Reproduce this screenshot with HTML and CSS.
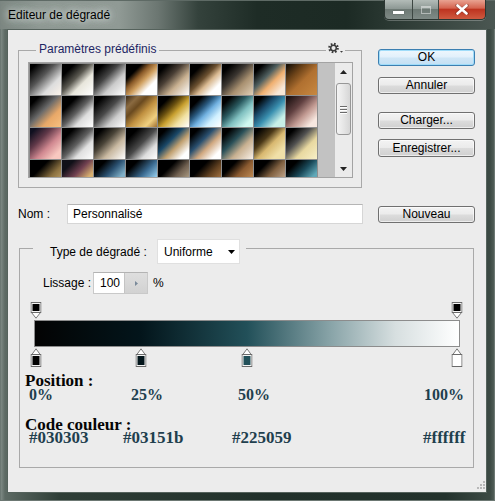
FILE: index.html
```html
<!DOCTYPE html>
<html lang="fr">
<head>
<meta charset="utf-8">
<title>Editeur de dégradé</title>
<link rel="stylesheet" href="styles.css">
</head>
<body>
<div class="window">
  <div class="titlebar">
    <span class="title">Editeur de dégradé</span>
    <div class="caps">
      <div class="cap cap-min"><span class="min-ico"></span></div>
      <div class="cap cap-max"><span class="max-ico"></span></div>
      <div class="cap cap-close">
        <svg width="14" height="11" viewBox="0 0 14 11"><path d="M2 1.5 L12 9.5 M12 1.5 L2 9.5" stroke="#3a1510" stroke-width="3.6" stroke-linecap="round" opacity=".35"/><path d="M2.5 1.5 L11.5 9.5 M11.5 1.5 L2.5 9.5" stroke="#fff" stroke-width="2.6" stroke-linecap="round"/></svg>
      </div>
    </div>
  </div>
  <div class="client">
    <div class="top">
      <div class="group presets">
        <div class="legend">Paramètres prédéfinis</div>
        <div class="gear">
          <svg width="19" height="13" viewBox="0 0 19 13"><circle cx="7.5" cy="6" r="4.1" fill="none" stroke="#3c3c3c" stroke-width="2.4" stroke-dasharray="1.6 1.62"/><circle cx="7.5" cy="6" r="2.8" fill="none" stroke="#3c3c3c" stroke-width="1.5"/><path d="M14 9 L17 9 L15.5 10.8 Z" fill="#3c3c3c"/></svg>
        </div>
        <div class="pane">
          <div class="grid">
            <div class="sw" style="background:linear-gradient(135deg,#000 10%,#555 40%,#ddd 70%,#fbf3ea)"></div>
            <div class="sw" style="background:linear-gradient(135deg,#000 20%,#5a5850 45%,#e8e6dc 65%,#fff)"></div>
            <div class="sw" style="background:linear-gradient(135deg,#000 15%,#444 40%,#ccc 65%,#fff)"></div>
            <div class="sw" style="background:linear-gradient(135deg,#000 25%,#8a5a28 40%,#d0a060 55%,#fff 75%)"></div>
            <div class="sw" style="background:linear-gradient(135deg,#000 15%,#4a3f35 40%,#c8b090 65%,#fff)"></div>
            <div class="sw" style="background:linear-gradient(135deg,#000 20%,#6b5030 45%,#d8b890 60%,#fff 80%)"></div>
            <div class="sw" style="background:linear-gradient(135deg,#000 15%,#3a3530 40%,#a89070 65%,#e0d0b8)"></div>
            <div class="sw" style="background:linear-gradient(135deg,#000 15%,#506060 40%,#f0b070 60%,#f8e8d8 85%)"></div>
            <div class="sw" style="background:linear-gradient(135deg,#1a1208 5%,#6b4218 30%,#b07030 55%,#c88840)"></div>

            <div class="sw" style="background:linear-gradient(135deg,#000 15%,#6a6a6a 45%,#e8a868 70%,#f8c080)"></div>
            <div class="sw" style="background:linear-gradient(135deg,#000 25%,#606060 50%,#ddd 70%,#fff)"></div>
            <div class="sw" style="background:linear-gradient(135deg,#000 15%,#4a4a4a 45%,#ccc 70%,#fff)"></div>
            <div class="sw" style="background:linear-gradient(135deg,#3a2a18 0,#8a6a40 20%,#6a4a20 35%,#c09040 55%,#f0d080 80%,#a07030)"></div>
            <div class="sw" style="background:linear-gradient(135deg,#000 20%,#6a5010 40%,#c8a030 55%,#f0e0a0 75%,#fff)"></div>
            <div class="sw" style="background:linear-gradient(135deg,#000 20%,#2a5a80 40%,#70b0e0 55%,#d0f0ff 75%,#fff)"></div>
            <div class="sw" style="background:linear-gradient(135deg,#000 15%,#2a5a60 40%,#80c0c0 60%,#d0f8f0 85%)"></div>
            <div class="sw" style="background:linear-gradient(135deg,#000 15%,#1a4a6a 35%,#3a90b0 55%,#c8f0e8 80%)"></div>
            <div class="sw" style="background:linear-gradient(135deg,#1a1010 5%,#604040 35%,#c09890 60%,#f8e8e0 85%)"></div>

            <div class="sw" style="background:linear-gradient(135deg,#101020 10%,#603848 35%,#d08890 60%,#f8c8c0 85%)"></div>
            <div class="sw" style="background:linear-gradient(135deg,#000 20%,#606060 50%,#e0e0e0 70%,#fff)"></div>
            <div class="sw" style="background:linear-gradient(135deg,#000 15%,#4a4438 40%,#c8b8a0 65%,#fff)"></div>
            <div class="sw" style="background:linear-gradient(135deg,#000 20%,#4a4a4a 50%,#ddd 75%,#fff)"></div>
            <div class="sw" style="background:linear-gradient(135deg,#000 15%,#1a4868 40%,#c0a070 60%,#fff 85%)"></div>
            <div class="sw" style="background:linear-gradient(135deg,#000 15%,#2a5070 40%,#d0a880 60%,#fff 85%)"></div>
            <div class="sw" style="background:linear-gradient(135deg,#000 15%,#2a5058 40%,#c8b090 65%,#f8f0e8)"></div>
            <div class="sw" style="background:linear-gradient(135deg,#000 10%,#4a3818 35%,#d8b870 55%,#f0e0a8 80%)"></div>
            <div class="sw" style="background:linear-gradient(135deg,#000 15%,#505050 40%,#e8d8a0 65%,#f8f0c8)"></div>

            <div class="sw" style="background:linear-gradient(135deg,#000 30%,#8a7040 60%,#e0c080)"></div>
            <div class="sw" style="background:linear-gradient(135deg,#101018 20%,#704050 45%,#d8b070 70%)"></div>
            <div class="sw" style="background:linear-gradient(135deg,#000 20%,#2a5070 45%,#80b0c8 70%)"></div>
            <div class="sw" style="background:linear-gradient(135deg,#000 20%,#3a6a90 50%,#90c8e8 75%)"></div>
            <div class="sw" style="background:linear-gradient(135deg,#000 30%,#706050 55%,#e0d0b0)"></div>
            <div class="sw" style="background:linear-gradient(135deg,#000 30%,#604020 55%,#e0a060)"></div>
            <div class="sw" style="background:linear-gradient(135deg,#000 25%,#8a5a30 50%,#e8b070)"></div>
            <div class="sw" style="background:linear-gradient(135deg,#000 25%,#806040 50%,#f0d8c0)"></div>
            <div class="sw" style="background:linear-gradient(135deg,#000 20%,#1a4a5a 45%,#60a8b8 70%)"></div>
          </div>
          <div class="filler"></div>
          <div class="scroll">
            <div class="sb-btn"><svg width="7" height="4" viewBox="0 0 7 4"><path d="M0 4 L3.5 0 L7 4 Z" fill="#222"/></svg></div>
            <div class="sb-track">
              <div class="thumb">
                <span class="grip-line"></span><span class="grip-line"></span><span class="grip-line"></span>
              </div>
            </div>
            <div class="sb-btn"><svg width="7" height="4" viewBox="0 0 7 4"><path d="M0 0 L7 0 L3.5 4 Z" fill="#222"/></svg></div>
          </div>
        </div>
      </div>
      <div class="btns">
        <button class="btn ok">OK</button>
        <button class="btn annuler">Annuler</button>
        <button class="btn charger">Charger...</button>
        <button class="btn enreg">Enregistrer...</button>
      </div>
    </div>

    <div class="namerow">
      <span class="namelbl">Nom :</span>
      <div class="nameinput">Personnalisé</div>
      <button class="btn nouveau">Nouveau</button>
    </div>

    <div class="group grad">
      <div class="gradhead">
        <span class="typelbl">Type de dégradé :</span>
        <div class="select"><span>Uniforme</span><svg width="7" height="4" viewBox="0 0 7 4"><path d="M0 0 L7 0 L3.5 4 Z" fill="#000"/></svg></div>
      </div>
      <div class="lissrow">
        <span class="lisslbl">Lissage :</span>
        <div class="spin"><span class="spinval">100</span><span class="spinbtn"><svg width="3" height="5" viewBox="0 0 3 5"><path d="M0 0 L3 2.5 L0 5 Z" fill="#7a8a9a"/></svg></span></div>
        <span class="pct">%</span>
      </div>
      <div class="stops stops-top">
        <span class="stop" style="left:calc(2px + 0 * 421px)"><svg width="11" height="17" viewBox="0 0 11 17"><path d="M1 10.5 L5.5 16.2 L10 10.5" fill="#fff" stroke="#7a7a7a"/><rect x="0.5" y="0.5" width="10" height="10" fill="#f4f4f4" stroke="#6a6a6a"/><rect x="2" y="2" width="7" height="7" fill="#000"/></svg></span>
        <span class="stop" style="left:calc(2px + 1 * 421px)"><svg width="11" height="17" viewBox="0 0 11 17"><path d="M1 10.5 L5.5 16.2 L10 10.5" fill="#fff" stroke="#7a7a7a"/><rect x="0.5" y="0.5" width="10" height="10" fill="#f4f4f4" stroke="#6a6a6a"/><rect x="2" y="2" width="7" height="7" fill="#000"/></svg></span>
      </div>
      <div class="bar"></div>
      <div class="stops stops-bottom">
        <span class="stop" style="left:calc(2px + 0 * 421px)"><svg width="11" height="19" viewBox="0 0 11 19"><path d="M1 7 L5.5 0.8 L10 7" fill="#fff" stroke="#7a7a7a"/><rect x="0.5" y="6.5" width="10" height="12" fill="#f4f4f4" stroke="#6a6a6a"/><rect x="2" y="8" width="7" height="9" fill="#030303"/></svg></span>
        <span class="stop" style="left:calc(2px + 0.25 * 421px)"><svg width="11" height="19" viewBox="0 0 11 19"><path d="M1 7 L5.5 0.8 L10 7" fill="#fff" stroke="#7a7a7a"/><rect x="0.5" y="6.5" width="10" height="12" fill="#f4f4f4" stroke="#6a6a6a"/><rect x="2" y="8" width="7" height="9" fill="#03151b"/></svg></span>
        <span class="stop" style="left:calc(2px + 0.5 * 421px)"><svg width="11" height="19" viewBox="0 0 11 19"><path d="M1 7 L5.5 0.8 L10 7" fill="#fff" stroke="#7a7a7a"/><rect x="0.5" y="6.5" width="10" height="12" fill="#f4f4f4" stroke="#6a6a6a"/><rect x="2" y="8" width="7" height="9" fill="#225059"/></svg></span>
        <span class="stop" style="left:calc(2px + 1 * 421px)"><svg width="11" height="19" viewBox="0 0 11 19"><path d="M1 7 L5.5 0.8 L10 7" fill="#fff" stroke="#7a7a7a"/><rect x="0.5" y="6.5" width="10" height="12" fill="#fff" stroke="#6a6a6a"/><rect x="2" y="8" width="7" height="9" fill="#ffffff"/></svg></span>
      </div>
      <div class="info">
        <div class="head">Position :</div>
        <div class="vals pcts">
          <span class="p1">0%</span><span class="p2">25%</span><span class="p3">50%</span><span>100%</span>
        </div>
        <div class="head head2">Code couleur :</div>
        <div class="vals codes">
          <span class="c1">#030303</span><span class="c2">#03151b</span><span class="c3">#225059</span><span>#ffffff</span>
        </div>
      </div>
    </div>

    <svg class="resize" width="10" height="10" viewBox="0 0 10 10"><g fill="#b8b8b8"><rect x="8" y="0" width="2" height="2"/><rect x="5" y="3" width="2" height="2"/><rect x="8" y="3" width="2" height="2"/><rect x="2" y="6" width="2" height="2"/><rect x="5" y="6" width="2" height="2"/><rect x="8" y="6" width="2" height="2"/></g></svg>
  </div>
</div>
</body>
</html>
```

FILE: styles.css
```css
* { box-sizing: border-box; }
html, body { margin: 0; padding: 0; }
body {
  width: 495px;
  height: 501px;
  overflow: hidden;
  background: #22302a;
  font-family: "Liberation Sans", Arial, sans-serif;
  font-size: 12px;
  color: #000;
}
.window {
  width: 495px;
  height: 501px;
  display: flex;
  flex-direction: column;
  background: linear-gradient(90deg, #85908b 0px, #5d6a64 5px, #2f3e37 12%, #21302a 55%, #23322c 90%, #3c4a44 99%, #56625d 100%);
  box-shadow: inset 0 0 0 1px #6c7873;
}
.titlebar {
  height: 29px;
  flex: none;
  display: flex;
  align-items: flex-start;
  background: linear-gradient(90deg, #7b8681 0%, #8e9893 8%, #909a95 24%, #6b7671 32%, #34423c 40%, #1e2c26 52%, #1c2a24 70%, #2b3933 79%, #4b5752 100%);
  box-shadow: inset 0 1px 0 #5e6a65, inset 1px 0 0 #7a8580;
}
.title {
  margin: 7px 0 0 8px;
  line-height: 16px;
  font-size: 12px;
  color: #000;
  text-shadow: 0 0 6px #dde3e0, 0 0 10px #c7cfcb, 0 0 14px #b0b9b5;
}
.caps {
  margin-left: auto;
  margin-right: 9px;
  height: 20px;
  display: flex;
  border: 1px solid #2c3632;
  border-top: none;
  border-radius: 0 0 5px 5px;
  overflow: hidden;
  box-shadow: 0 1px 0 rgba(255,255,255,.25);
}
.cap {
  height: 19px;
  display: flex;
  align-items: center;
  justify-content: center;
}
.cap-min {
  width: 28px;
  background: linear-gradient(#b3bcb8 0%, #8e9995 45%, #6d7974 50%, #7f8a86 100%);
  border-right: 1px solid #3d4743;
}
.cap-max {
  width: 26px;
  background: linear-gradient(#b3bcb8 0%, #8e9995 45%, #6d7974 50%, #7f8a86 100%);
  border-right: 1px solid #3d4743;
}
.cap-close {
  width: 46px;
  background: linear-gradient(#e9a291 0%, #d56450 42%, #be3420 50%, #cf5a40 100%);
}
.min-ico {
  width: 11px;
  height: 3px;
  margin-top: 6px;
  background: #fff;
  box-shadow: 0 0 1px #333;
}
.max-ico {
  width: 10px;
  height: 8px;
  border: 1px solid rgba(255,255,255,.45);
  border-top-width: 2px;
}

.client {
  position: relative;
  height: 464px;
  margin: 0 8px 0 7px;
  background: #ececec;
  box-shadow: inset 0 0 0 1px #55625c;
  flex: none;
}
.top {
  display: flex;
  align-items: flex-start;
}
.group {
  position: relative;
  border: 1px solid #a9a9a9;
}
.presets {
  margin: 21px 0 0 11px;
  width: 344px;
  padding: 11px 0 9px 9px;
}
.legend {
  position: absolute;
  top: -10px;
  left: 17px;
  padding: 0 3px;
  line-height: 16px;
  background: #ececec;
  color: #1d2563;
}
.gear {
  position: absolute;
  top: -10px;
  right: 16px;
  width: 19px;
  height: 14px;
  padding-top: 1px;
  background: #ececec;
  display: flex;
}
.pane {
  display: flex;
  width: 325px;
  height: 116px;
  border: 1px solid #a3a3a3;
  overflow: hidden;
}
.grid {
  display: grid;
  grid-template-columns: repeat(9, 31px);
  grid-auto-rows: 31px;
  gap: 1px;
  padding: 1px;
  width: 289px;
  height: 114px;
  overflow: hidden;
  background: #8f8f8f;
  align-content: start;
}
.sw { width: 31px; height: 31px; }
.filler {
  width: 17px;
  height: 114px;
  background: #c2c2c2;
}
.scroll {
  width: 17px;
  height: 114px;
  display: flex;
  flex-direction: column;
  background: #ebebeb;
}
.sb-btn {
  height: 17px;
  flex: none;
  display: flex;
  align-items: center;
  justify-content: center;
}
.sb-track {
  flex: 1;
}
.thumb {
  margin: 3px 0 0 1px;
  width: 15px;
  height: 52px;
  border: 1px solid #979797;
  border-radius: 3px;
  background: linear-gradient(90deg, #f4f4f4, #e6e6e6 50%, #d6d6d6);
  display: flex;
  flex-direction: column;
  align-items: center;
  justify-content: center;
  gap: 2px;
}
.grip-line {
  width: 7px;
  height: 1px;
  background: #6b6b6b;
  box-shadow: 0 1px 0 #fff;
}

.btns {
  display: flex;
  flex-direction: column;
  margin: 20px 0 0 16px;
}
.btn {
  display: block;
  width: 97px;
  height: 17px;
  padding: 0;
  margin: 0;
  border: 1px solid #707070;
  border-radius: 3px;
  background: linear-gradient(#f3f3f3 0%, #ebebeb 48%, #dcdcdc 52%, #d0d0d0 100%);
  font-family: "Liberation Sans", Arial, sans-serif;
  font-size: 12px;
  line-height: 15px;
  color: #000;
  text-align: center;
  box-shadow: inset 0 0 0 1px rgba(255,255,255,.6);
}
.ok {
  border-color: #3c7fb1;
  background: linear-gradient(#eef7fd 0%, #e1f0fb 48%, #cfe6f6 52%, #c4e0f4 100%);
  box-shadow: inset 0 0 0 1px #9fdcf9;
}
.annuler { margin-top: 11px; }
.charger { margin-top: 18px; }
.enreg { margin-top: 10px; height: 18px; }

.namerow {
  display: flex;
  align-items: center;
  margin: 16px 0 0 11px;
  height: 20px;
}
.namelbl { width: 49px; line-height: 14px; }
.nameinput {
  width: 296px;
  height: 20px;
  padding-left: 5px;
  line-height: 18px;
  background: #fff;
  border: 1px solid #d6d6d6;
  border-top-color: #b5b5b5;
}
.nouveau { margin-left: 15px; }

.grad {
  margin: 24px 0 0 12px;
  width: 455px;
  height: 220px;
}
.gradhead {
  display: flex;
  align-items: center;
  width: fit-content;
  margin: -10px 0 0 13px;
  padding: 0 6px 0 17px;
  height: 25px;
  background: #ececec;
}
.typelbl { line-height: 14px; width: 107px; }
.select {
  width: 83px;
  height: 25px;
  display: flex;
  align-items: center;
  justify-content: space-between;
  padding: 0 4px 0 6px;
  background: #fff;
  border: 1px solid #e0e0e0;
}
.lissrow {
  display: flex;
  align-items: center;
  margin: 8px 0 0 23px;
  height: 22px;
}
.lisslbl { width: 50px; line-height: 14px; }
.spin {
  display: flex;
  width: 55px;
  height: 22px;
  border: 1px solid #c9c9c9;
  border-top-color: #b3b3b3;
  background: #fff;
}
.spinval {
  width: 30px;
  line-height: 20px;
  padding-left: 6px;
}
.spinbtn {
  flex: 1;
  display: flex;
  align-items: center;
  justify-content: center;
  background: linear-gradient(#dedede, #d2d2d2);
  border-left: 1px solid #c4c4c4;
}
.pct { margin-left: 5px; line-height: 14px; }

.stops {
  position: relative;
  margin-left: 14px;
  width: 426px;
}
.stops-top { margin-top: 8px; height: 18px; }
.stops-bottom { height: 19px; margin-top: 1px; }
.stop {
  position: absolute;
  top: 0;
  width: 11px;
  transform: translateX(-50%);
  display: flex;
}
.bar {
  margin-left: 14px;
  width: 426px;
  height: 27px;
  border: 1px solid #8c8c8c;
  background: linear-gradient(90deg, #030303 0%, #03151b 25%, #225059 50%, #8aa5a9 70%, #d7dfe0 85%, #ffffff 100%);
}

.info {
  margin: 6px 0 0 5px;
  font-family: "Liberation Serif", "Times New Roman", serif;
  font-weight: bold;
}
.head {
  font-size: 17px;
  line-height: 15px;
  color: #050505;
}
.head2 { margin-top: 16px; }
.vals {
  display: flex;
  padding-left: 4px;
  color: #1f3f4e;
  white-space: nowrap;
}
.pcts { font-size: 16px; line-height: 13px; }
.codes { font-size: 17px; line-height: 12px; }
.p1 { width: 102px; }
.p2 { width: 107px; }
.p3 { width: 186px; }
.c1 { width: 94px; }
.c2 { width: 109px; }
.c3 { width: 191px; }

.resize {
  position: absolute;
  right: 2px;
  bottom: 2px;
}
```
